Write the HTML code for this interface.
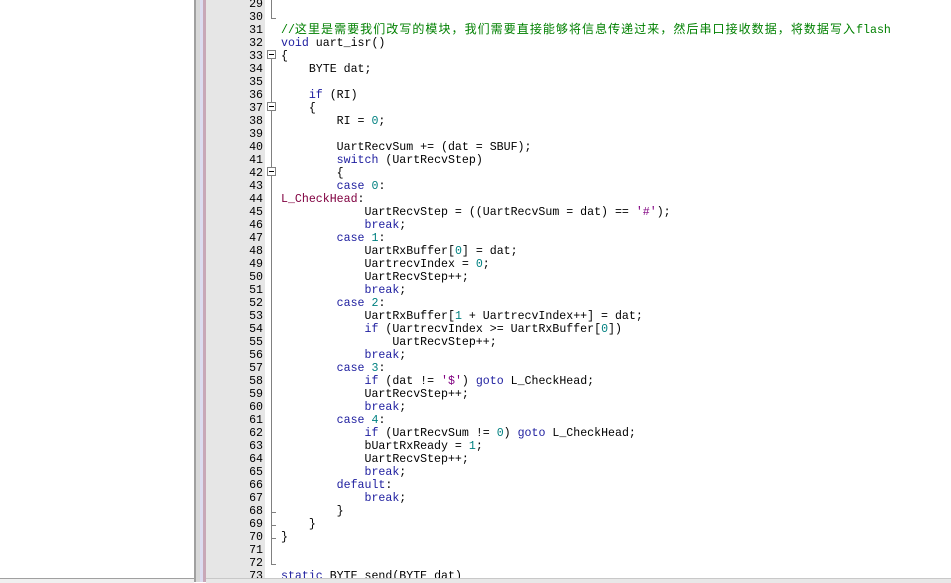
<!DOCTYPE html>
<html><head><meta charset="utf-8"><style>
body{margin:0;width:951px;height:582px;overflow:hidden;background:#fff;position:relative;font-family:"Liberation Mono","Noto Sans CJK SC",monospace;}
.lp{position:absolute;left:0;top:0;width:194px;height:582px;background:#fff;}
.b1{position:absolute;left:194px;top:0;width:2px;height:582px;background:#a0a0a0}
.b2{position:absolute;left:196px;top:0;width:4px;height:582px;background:#d8d8d8}
.b3{position:absolute;left:200px;top:0;width:3px;height:582px;background:#dcdcf0}
.b4{position:absolute;left:203px;top:0;width:3px;height:582px;background:#c8a8b8}
.gut{position:absolute;left:206px;top:0;width:59px;height:582px;background:#e6e6e6}
.fold{position:absolute;left:265px;top:0;width:14px;height:582px;background:#fff}
.vl{position:absolute;left:271px;width:1px;background:#808080}
.box{position:absolute;left:267px;width:7px;height:7px;border:1px solid #808080;background:#fff}
.box:after{content:"";position:absolute;left:1px;top:3px;width:5px;height:1px;background:#000}
.tk{position:absolute;left:271px;width:5px;height:1px;background:#808080}
.ln{position:absolute;left:206px;width:57px;text-align:right;font-size:11.6px;line-height:13px;color:#000}
.code{position:absolute;left:281px;top:-2px;font-size:11.6px;line-height:13px;white-space:pre;color:#000}
.k{color:#2020a0}.n{color:#008080}.c{color:#008000}.l{color:#800040}.s{color:#800080}
.cj{letter-spacing:1.05px;font-size:12px}
.bot{position:absolute;left:206px;top:578px;width:745px;height:4px;background:#e8e8e8;border-top:1px solid #c8c8c8}
.tab1{position:absolute;left:0;top:578px;width:194px;height:4px;background:#f0f0f0;border-top:1px solid #a0a0a0}
</style></head><body>
<div class="lp"></div><div class="tab1"></div>
<div class="b1"></div><div class="b2"></div><div class="b3"></div><div class="b4"></div>
<div class="gut"></div><div class="fold"></div>
<div class="ln" style="top:-2px">29<br>30<br>31<br>32<br>33<br>34<br>35<br>36<br>37<br>38<br>39<br>40<br>41<br>42<br>43<br>44<br>45<br>46<br>47<br>48<br>49<br>50<br>51<br>52<br>53<br>54<br>55<br>56<br>57<br>58<br>59<br>60<br>61<br>62<br>63<br>64<br>65<br>66<br>67<br>68<br>69<br>70<br>71<br>72<br>73</div>
<div class="vl" style="top:0;height:19px"></div><div class="tk" style="top:18px"></div>
<div class="vl" style="top:58px;height:488px"></div>
<div class="tk" style="top:512px"></div><div class="tk" style="top:525px"></div><div class="tk" style="top:538px"></div>
<div class="vl" style="top:542px;height:23px"></div><div class="tk" style="top:564px"></div>
<div class="box" style="top:50px"></div><div class="box" style="top:102px"></div><div class="box" style="top:167px"></div>
<div class="code">

<span class="c">//<span class="cj">这里是需要我们改写的模块，我们需要直接能够将信息传递过来，然后串口接收数据，将数据写入</span>flash</span>
<span class="k">void</span> uart_isr()
{
    BYTE dat;

    <span class="k">if</span> (RI)
    {
        RI = <span class="n">0</span>;

        UartRecvSum += (dat = SBUF);
        <span class="k">switch</span> (UartRecvStep)
        {
        <span class="k">case</span> <span class="n">0</span>:
<span class="l">L_CheckHead</span>:
            UartRecvStep = ((UartRecvSum = dat) == <span class="s">'#'</span>);
            <span class="k">break</span>;
        <span class="k">case</span> <span class="n">1</span>:
            UartRxBuffer[<span class="n">0</span>] = dat;
            UartrecvIndex = <span class="n">0</span>;
            UartRecvStep++;
            <span class="k">break</span>;
        <span class="k">case</span> <span class="n">2</span>:
            UartRxBuffer[<span class="n">1</span> + UartrecvIndex++] = dat;
            <span class="k">if</span> (UartrecvIndex &gt;= UartRxBuffer[<span class="n">0</span>])
                UartRecvStep++;
            <span class="k">break</span>;
        <span class="k">case</span> <span class="n">3</span>:
            <span class="k">if</span> (dat != <span class="s">'$'</span>) <span class="k">goto</span> L_CheckHead;
            UartRecvStep++;
            <span class="k">break</span>;
        <span class="k">case</span> <span class="n">4</span>:
            <span class="k">if</span> (UartRecvSum != <span class="n">0</span>) <span class="k">goto</span> L_CheckHead;
            bUartRxReady = <span class="n">1</span>;
            UartRecvStep++;
            <span class="k">break</span>;
        <span class="k">default</span>:
            <span class="k">break</span>;
        }
    }
}


<span class="k">static</span> BYTE send(BYTE dat)</div>
<div class="bot"></div>
</body></html>
